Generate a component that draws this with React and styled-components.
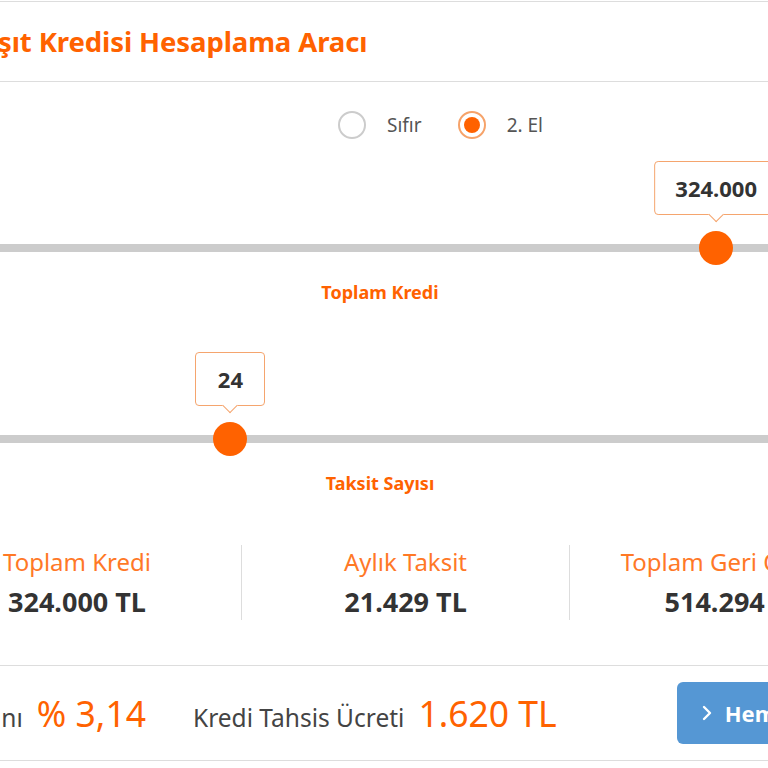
import React from "react";
import styled, { createGlobalStyle } from "styled-components";

const ORANGE = "#ff6200";
const DARK = "#333333";
const LINE = "#dddddd";

const GlobalStyle = createGlobalStyle`
  html, body {
    margin: 0;
    padding: 0;
    background: #ffffff;
    overflow: hidden;
  }
  body {
    font-family: "Noto Sans", "Open Sans", "Liberation Sans", sans-serif;
    color: ${DARK};
  }
`;

const Viewport = styled.div`
  width: 768px;
  height: 768px;
  overflow: hidden;
  padding-top: 1px;
  box-sizing: border-box;
`;

const Calculator = styled.section`
  width: 984px;
  margin-left: -87px;
  border-top: 1px solid ${LINE};
`;

const Header = styled.header`
  height: 79px;
  display: flex;
  align-items: center;
  padding-left: 55px;
  border-bottom: 1px solid ${LINE};
`;

const Title = styled.h1`
  margin: 0;
  font-size: 27.5px;
  font-weight: 700;
  color: ${ORANGE};
  letter-spacing: -0.1px;
`;

const RadioRow = styled.div`
  display: flex;
  align-items: center;
  gap: 22px;
  padding: 29px 0 0 425px;
  height: 28px;
`;

const RadioOption = styled.label`
  display: flex;
  align-items: center;
  gap: 21px;
  font-size: 19px;
  color: #555555;
  margin-right: 14px;
`;

const RadioCircle = styled.span`
  width: 24px;
  height: 24px;
  border-radius: 50%;
  border: 2px solid ${(p) => (p.checked ? "#f6a36a" : "#cccccc")};
  display: flex;
  align-items: center;
  justify-content: center;
  box-sizing: content-box;

  &::after {
    content: "";
    width: 16px;
    height: 16px;
    border-radius: 50%;
    background: ${ORANGE};
    display: ${(p) => (p.checked ? "block" : "none")};
  }
`;

const SliderBlock = styled.div`
  padding: ${(p) => p.top}px 77px 0 27px;
`;

const Track = styled.div`
  position: relative;
  height: 8px;
  background: #cccccc;
`;

const Thumb = styled.span`
  position: absolute;
  top: 50%;
  width: 34px;
  height: 34px;
  border-radius: 50%;
  background: ${ORANGE};
  transform: translate(-50%, -50%);
`;

const Bubble = styled.div`
  position: absolute;
  bottom: 37px;
  transform: translateX(-50%);
  height: 52px;
  padding: 0 20px;
  min-width: 28px;
  display: flex;
  align-items: center;
  justify-content: center;
  border: 1px solid #f5a56e;
  border-radius: 4px;
  background: #fff;
  font-size: 22px;
  font-weight: 700;
  color: ${DARK};
  white-space: nowrap;

  &::after {
    content: "";
    position: absolute;
    left: 50%;
    bottom: -6px;
    width: 10px;
    height: 10px;
    background: #fff;
    border-right: 1px solid #f5a56e;
    border-bottom: 1px solid #f5a56e;
    transform: translateX(-50%) rotate(45deg);
  }
`;

const SliderLabel = styled.div`
  text-align: center;
  margin-top: 28px;
  font-size: 18px;
  font-weight: 700;
  color: ${ORANGE};
`;

const Results = styled.div`
  display: grid;
  grid-template-columns: repeat(3, 1fr);
  margin-top: 50px;
`;

const ResultCell = styled.div`
  display: flex;
  flex-direction: column;
  align-items: center;
  height: 75px;
  justify-content: center;
  gap: 10px;
  border-left: ${(p) => (p.first ? "none" : `1px solid ${LINE}`)};
`;

const ResultLabel = styled.span`
  font-size: 24px;
  line-height: 28px;
  color: ${ORANGE};
  opacity: 0.85;
  white-space: nowrap;
`;

const ResultValue = styled.span`
  font-size: 27px;
  line-height: 32px;
  font-weight: 700;
  color: ${DARK};
  white-space: nowrap;
`;

const Footer = styled.div`
  display: flex;
  align-items: center;
  height: 94px;
  margin-top: 45px;
  border-top: 1px solid ${LINE};
  border-bottom: 1px solid ${LINE};
`;

const Rate = styled.div`
  display: flex;
  align-items: baseline;
  gap: 14px;
  padding-right: 20px;
  width: 253px;
  justify-content: flex-end;
  box-sizing: border-box;
  white-space: nowrap;
`;

const FooterText = styled.span`
  font-size: 24.5px;
  color: #444444;
`;

const FooterValue = styled.span`
  font-size: 35.5px;
  color: ${ORANGE};
`;

const FooterDivider = styled.span`
  width: 1px;
  height: 52px;
  background: ${LINE};
  margin-right: 27px;
`;

const Fee = styled.div`
  display: flex;
  align-items: baseline;
  gap: 14px;
  white-space: nowrap;
`;

const ApplyButton = styled.button`
  margin-left: 120px;
  height: 62px;
  border: none;
  border-radius: 6px;
  background: #5597d4;
  color: #fff;
  font-family: inherit;
  font-size: 22px;
  font-weight: 700;
  display: flex;
  align-items: center;
  gap: 12px;
  padding: 0 28px 0 24px;
  flex-shrink: 0;
  white-space: nowrap;
`;

const Chevron = () => (
  <svg width="12" height="18" viewBox="0 0 12 18" fill="none">
    <path d="M3 3l6 6-6 6" stroke="#fff" strokeWidth="2.4" strokeLinecap="round" strokeLinejoin="round" />
  </svg>
);

function Slider({ top, percent, value, label }) {
  return (
    <SliderBlock top={top}>
      <Track>
        <Bubble style={{ left: `${percent}%` }}>{value}</Bubble>
        <Thumb style={{ left: `${percent}%` }} />
      </Track>
      <SliderLabel>{label}</SliderLabel>
    </SliderBlock>
  );
}

export default function App() {
  return (
    <>
      <GlobalStyle />
      <Viewport>
        <Calculator>
          <Header>
            <Title>Taşıt Kredisi Hesaplama Aracı</Title>
          </Header>
          <RadioRow>
            <RadioOption>
              <RadioCircle />
              Sıfır
            </RadioOption>
            <RadioOption>
              <RadioCircle checked />
              2. El
            </RadioOption>
          </RadioRow>
          <Slider top={105} percent={88.2} value="324.000" label="Toplam Kredi" />
          <Slider top={131} percent={33} value="24" label="Taksit Sayısı" />
          <Results>
            <ResultCell first>
              <ResultLabel>Toplam Kredi</ResultLabel>
              <ResultValue>324.000 TL</ResultValue>
            </ResultCell>
            <ResultCell>
              <ResultLabel>Aylık Taksit</ResultLabel>
              <ResultValue>21.429 TL</ResultValue>
            </ResultCell>
            <ResultCell>
              <ResultLabel>Toplam Geri Ödeme</ResultLabel>
              <ResultValue>514.294 TL</ResultValue>
            </ResultCell>
          </Results>
          <Footer>
            <Rate>
              <FooterText>Faiz Oranı</FooterText>
              <FooterValue>% 3,14</FooterValue>
            </Rate>
            <FooterDivider />
            <Fee>
              <FooterText>Kredi Tahsis Ücreti</FooterText>
              <FooterValue>1.620 TL</FooterValue>
            </Fee>
            <ApplyButton>
              <Chevron />
              Hemen Başvur
            </ApplyButton>
          </Footer>
        </Calculator>
      </Viewport>
    </>
  );
}
